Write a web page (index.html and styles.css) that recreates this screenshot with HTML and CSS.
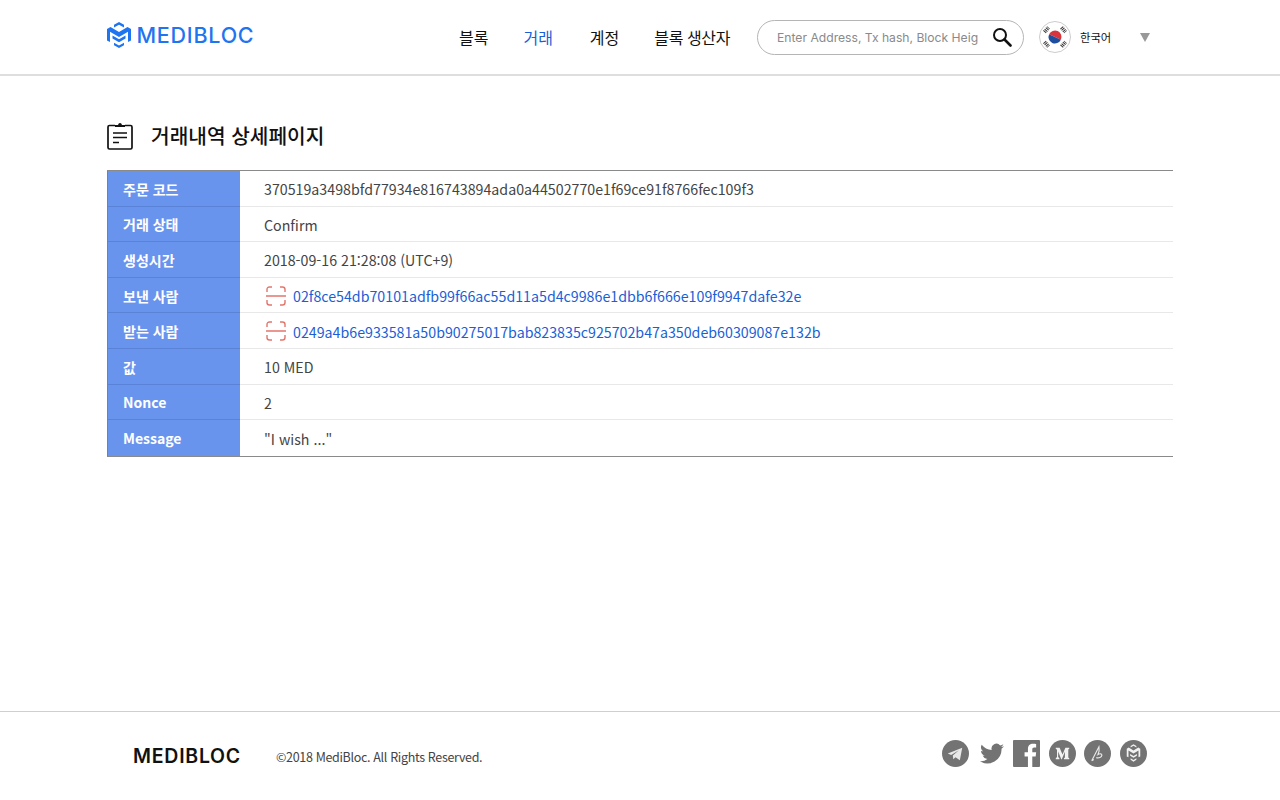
FILE: index.html
```html
<!DOCTYPE html>
<html lang="ko">
<head>
<meta charset="utf-8">
<title>MediBloc</title>
<link rel="stylesheet" href="styles.css">
</head>
<body>
<div class="page">
  <header class="header">
    <a class="logo">
      <svg class="logo-mark" viewBox="0 0 24 26" width="24" height="26"><g fill="#1f74f0"><path d="M12 0l5 2.800v2.700L12 2.700 7 5.500V2.800z"/><path d="M0 7l3.500-2L12 10l8.500-5L24 7v11.500L21 20V9.700l-9 5.300-9-5.300V20L0 18.500z"/><path d="M5.500 13.500l6.500 3.800 6.500-3.800v3L12 20.300 5.500 16.500z"/><path d="M7 20.700l5 2.800 5-2.800v2.500L12 26l-5-2.800z"/></g></svg>
      <span class="logo-text">MEDIBLOC</span>
    </a>
    <nav class="nav">
      <a class="nav-item">블록</a>
      <a class="nav-item active">거래</a>
      <a class="nav-item">계정</a>
      <a class="nav-item nav-last">블록 생산자</a>
    </nav>
    <div class="search">
      <span class="search-text">Enter Address, Tx hash, Block Heig</span>
      <svg class="search-icon" viewBox="0 0 20 20" width="20" height="20"><circle cx="8" cy="8" r="6" fill="none" stroke="#111" stroke-width="2"/><path d="M12.500 12.500L18.500 18.500" stroke="#111" stroke-width="2.600" stroke-linecap="round"/></svg>
    </div>
    <div class="lang">
      <svg class="flag" viewBox="0 0 32 32" width="32" height="32">
        <circle cx="16" cy="16" r="15.500" fill="#fff" stroke="#ccc"/>
        <path d="M9.500 16a6.500 6.500 0 0 1 13 0z" fill="#d8343c" transform="rotate(25 16 16)"/>
        <path d="M9.500 16a6.500 6.500 0 0 0 13 0z" fill="#1f4e9e" transform="rotate(25 16 16)"/>
        <g stroke="#333" stroke-width="3.800" stroke-dasharray="1 .8">
          <path d="M5.500 11l4-4.500"/><path d="M22.500 6.500l4 4.500"/><path d="M5.500 21l4 4.500"/><path d="M22.500 25.500l4-4.500"/>
        </g>
      </svg>
      <span class="lang-text">한국어</span>
      <span class="caret"></span>
    </div>
  </header>
  <main class="main">
    <h1 class="title">
      <svg class="title-icon" viewBox="0 0 26 28" width="26" height="28"><path d="M8 3.500H2.500q-1.500 0-1.500 1.500v20.500q0 1.500 1.500 1.500h21q1.500 0 1.500-1.500V5q0-1.500-1.500-1.500H18" fill="none" stroke="#111" stroke-width="1.700"/><path d="M8 5V3h3q.5-2 2-2t2 2h3v2z" fill="#111"/><path d="M6 11h14M6 15.500h14M6 20.500h6" stroke="#111" stroke-width="1.600"/></svg>
      <span>거래내역 상세페이지</span>
    </h1>
    <div class="detail">
      <div class="row"><div class="label">주문 코드</div><div class="value">370519a3498bfd77934e816743894ada0a44502770e1f69ce91f8766fec109f3</div></div>
      <div class="row"><div class="label">거래 상태</div><div class="value">Confirm</div></div>
      <div class="row"><div class="label">생성시간</div><div class="value">2018-09-16 21:28:08 (UTC+9)</div></div>
      <div class="row"><div class="label">보낸 사람</div><div class="value">
        <svg class="qr" viewBox="0 0 20 20" width="20" height="20"><path d="M1 6V3.500Q1 1 3.500 1H6M14 1h2.500Q19 1 19 3.500V6M1 14v2.500Q1 19 3.500 19H6M14 19h2.500q2.500 0 2.500-2.500V14M0 10h20" fill="none" stroke="#e2766c" stroke-width="1.400"/></svg>
        <a class="link">02f8ce54db70101adfb99f66ac55d11a5d4c9986e1dbb6f666e109f9947dafe32e</a></div></div>
      <div class="row"><div class="label">받는 사람</div><div class="value">
        <svg class="qr" viewBox="0 0 20 20" width="20" height="20"><path d="M1 6V3.500Q1 1 3.500 1H6M14 1h2.500Q19 1 19 3.500V6M1 14v2.500Q1 19 3.500 19H6M14 19h2.500q2.500 0 2.500-2.500V14M0 10h20" fill="none" stroke="#e2766c" stroke-width="1.400"/></svg>
        <a class="link">0249a4b6e933581a50b90275017bab823835c925702b47a350deb60309087e132b</a></div></div>
      <div class="row"><div class="label">값</div><div class="value">10 MED</div></div>
      <div class="row"><div class="label">Nonce</div><div class="value">2</div></div>
      <div class="row"><div class="label">Message</div><div class="value">"I wish ..."</div></div>
    </div>
  </main>
  <footer class="footer">
    <span class="footer-logo">MEDIBLOC</span>
    <span class="copy">©2018 MediBloc. All Rights Reserved.</span>
    <div class="social">
      <svg viewBox="0 0 28 28" width="27" height="27"><circle cx="14" cy="14" r="14" fill="#737373"/><path d="M6 14l15-6-2.500 13-4.500-3.200-2.300 2.200-.5-3.800 6.300-5.700-8 5z" fill="#e8e8e8"/></svg>
      <svg viewBox="0 0 28 28" width="27" height="27"><path d="M27 6.500c-1 .4-1.900.7-3 .8 1.100-.7 1.900-1.700 2.300-2.900-1 .6-2.100 1-3.300 1.300a5.100 5.100 0 0 0-8.800 4.700C10 10 6.300 8 3.800 4.800c-1.400 2.400-.7 5.400 1.600 6.900-.8 0-1.600-.2-2.300-.6 0 2.500 1.700 4.600 4.100 5-.7.200-1.500.2-2.300.1.700 2 2.600 3.500 4.800 3.500A10.300 10.300 0 0 1 2 22a14.600 14.600 0 0 0 22.400-13c1-.7 1.900-1.600 2.600-2.500z" fill="#737373"/></svg>
      <svg viewBox="0 0 28 28" width="27" height="27"><path d="M1 0h26q1 0 1 1v26q0 1-1 1h-7V17h3.500l.5-4.300h-4V10c0-1.300.4-2.100 2.100-2.100H24V4.100c-.4 0-1.700-.2-3.200-.2-3.200 0-5.300 1.900-5.300 5.500v3.300H12V17h3.500v11H1q-1 0-1-1V1q0-1 1-1z" fill="#737373"/></svg>
      <svg viewBox="0 0 28 28" width="27" height="27"><circle cx="14" cy="14" r="14" fill="#737373"/><path d="M7 8h4l3 7 3-7h4v1l-1 .8v8.400l1 .8v1h-5.500v-1l1-.8v-6l-3.200 7.800h-.6L9.500 12v5.500l1.300 1.500v1H7v-1l1.300-1.500V10L7 9z" fill="#f2f2f2"/></svg>
      <svg viewBox="0 0 28 28" width="27" height="27"><circle cx="14" cy="14" r="14" fill="#737373"/><path d="M8 21.500L15.500 7c.5 3 .5 5-1 8 2-1.300 4.200-.8 4 1-.2 2-3.200 3-5.800 2.300M8 21.500l2.200-1.200" fill="none" stroke="#e8e8e8" stroke-width="1.200"/></svg>
      <svg viewBox="0 0 28 28" width="27" height="27"><circle cx="14" cy="14" r="14" fill="#737373"/><g fill="#f2f2f2"><path d="M14 4.500l3 1.700v1.500l-3-1.700-3 1.700V6.200z"/><path d="M7 9l2-1.100 5 3 5-3L21 9v8l-1.800 1v-7.200L14 14l-5.200-3.200V18L7 17z"/><path d="M10.500 14.500l3.500 2 3.500-2v1.800L14 18.300l-3.500-2z"/><path d="M11 19l3 1.700 3-1.700v1.500l-3 2-3-2z"/></g></svg>
    </div>
  </footer>
</div>
</body>
</html>
```
FILE: styles.css
```css
* { box-sizing: border-box; }
html, body { margin: 0; padding: 0; background: #fff; }
body { font-family: "Noto Sans CJK KR", "Noto Sans", sans-serif; color: #333; }
svg { display: block; flex: none; }

.page { display: flex; flex-direction: column; height: 800px; overflow: hidden; }

.header {
  display: flex; align-items: center; height: 76px; flex: none;
  padding: 0 130px 0 106.500px;
  border-bottom: 2px solid #dedede;
}
.logo { display: flex; align-items: center; gap: 6px; margin-top: -5px; }
.logo-text { font-family: Inter, sans-serif; font-size: 21.500px; font-weight: 500; color: #1f74f0; letter-spacing: .75px; line-height: 26px; }
.nav { display: flex; gap: 35px; margin-left: auto; }
.nav-item { font-size: 16px; line-height: 24px; color: #111; white-space: nowrap; }
.nav-item.active { color: #1a5fd6; margin-right: 2px; }
.nav-last { letter-spacing: -.4px; }
.search {
  display: flex; align-items: center; justify-content: space-between;
  width: 267px; height: 35px; margin-left: 27px;
  padding: 0 11px 0 19px; border: 1px solid #b5b5b5; border-radius: 18px;
}
.search-text { font-family: "Inter", sans-serif; font-size: 12.150px; color: #8a8a8a; white-space: nowrap; }
.lang { display: flex; align-items: center; margin-left: 15px; }
.lang-text { font-size: 11.300px; color: #111; margin-left: 9px; width: 60px; }
.caret { width: 0; height: 0; border-left: 5.500px solid transparent; border-right: 5.500px solid transparent; border-top: 9px solid #999; margin-top: 1px; }

.main { flex: 1; padding: 46px 107px 0; }
.title { display: flex; align-items: center; gap: 18px; margin: 0 0 20px; height: 28px; font-size: 20.250px; font-weight: 500; color: #111; line-height: 28px; }
.detail { border-top: 1px solid #8a8a8a; border-bottom: 1px solid #8a8a8a; }
.row { display: grid; grid-template-columns: 133px 1fr; height: 35.600px; }
.label {
  display: flex; align-items: center; padding: 1px 0 0 15px;
  background: #6994ee; color: #fff; font-size: 14px; font-weight: 700;
  border-bottom: 1px solid #5a83d8; border-left: 1px solid #5a83d8;
}
.row:last-child .label { border-bottom: 0; }
.value {
  display: flex; align-items: center; padding: 1px 0 0 24px;
  font-size: 14.230px; color: #444; border-bottom: 1px solid #e8e8e8;
}
.row:last-child .value { border-bottom: 0; }
.qr { margin: 0 7px 0 2px; }
.link { color: #1a5fd6; }

.footer {
  display: flex; align-items: center; height: 89px; flex: none;
  padding: 0 133px 0 133px; border-top: 1px solid #cfcfcf;
}
.footer-logo { font-family: Inter, sans-serif; font-size: 19.500px; font-weight: 600; color: #111; letter-spacing: .75px; line-height: 24px; width: 143px; white-space: nowrap; }
.copy { font-size: 12.500px; letter-spacing: -.33px; color: #444; }
.social { display: flex; gap: 8.600px; margin-left: auto; margin-top: -5px; }
```
